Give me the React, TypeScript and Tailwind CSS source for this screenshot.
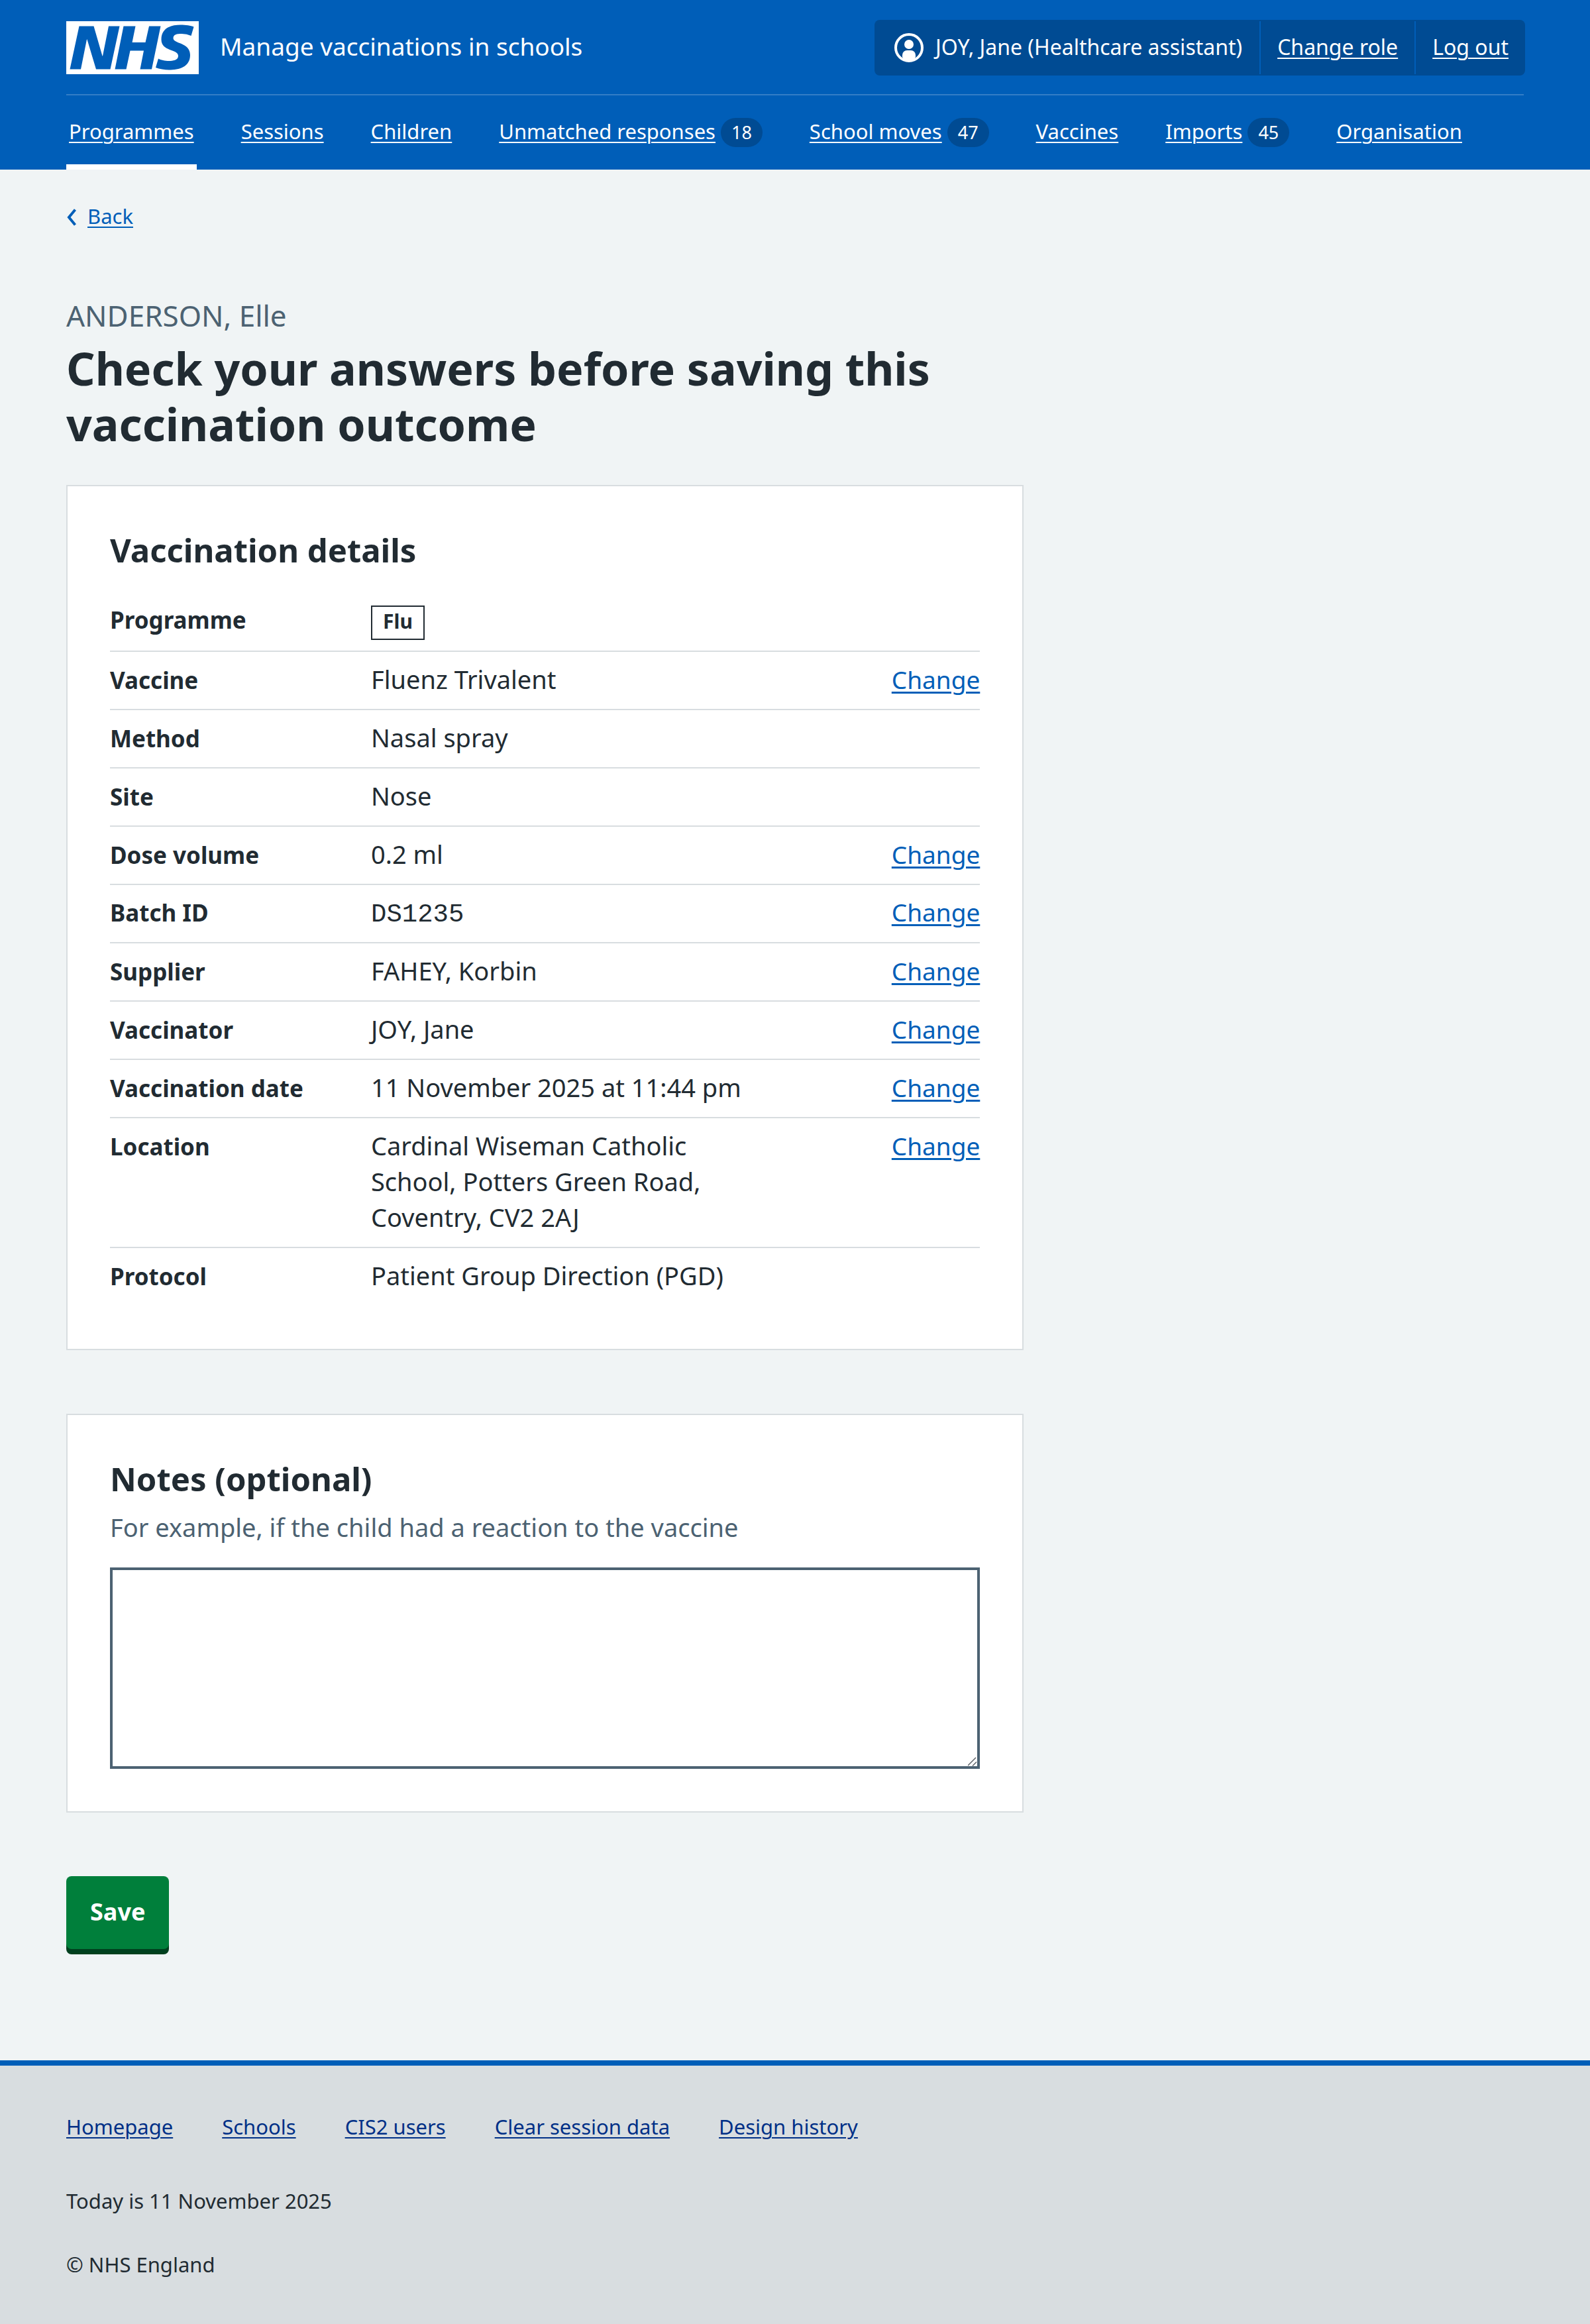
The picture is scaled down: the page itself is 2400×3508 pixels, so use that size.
import React from 'react';

type NavItem = { label: string; count?: number; current?: boolean };

const navItems: NavItem[] = [
  { label: 'Programmes', current: true },
  { label: 'Sessions' },
  { label: 'Children' },
  { label: 'Unmatched responses', count: 18 },
  { label: 'School moves', count: 47 },
  { label: 'Vaccines' },
  { label: 'Imports', count: 45 },
  { label: 'Organisation' },
];

type Row = { label: string; value: string; change?: boolean; kind?: 'tag' | 'code' };

const rows: Row[] = [
  { label: 'Programme', value: 'Flu', kind: 'tag' },
  { label: 'Vaccine', value: 'Fluenz Trivalent', change: true },
  { label: 'Method', value: 'Nasal spray' },
  { label: 'Site', value: 'Nose' },
  { label: 'Dose volume', value: '0.2 ml', change: true },
  { label: 'Batch ID', value: 'DS1235', change: true, kind: 'code' },
  { label: 'Supplier', value: 'FAHEY, Korbin', change: true },
  { label: 'Vaccinator', value: 'JOY, Jane', change: true },
  { label: 'Vaccination date', value: '11 November 2025 at 11:44 pm', change: true },
  {
    label: 'Location',
    value: 'Cardinal Wiseman Catholic School, Potters Green Road, Coventry, CV2 2AJ',
    change: true,
  },
  { label: 'Protocol', value: 'Patient Group Direction (PGD)' },
];

const footerLinks = ['Homepage', 'Schools', 'CIS2 users', 'Clear session data', 'Design history'];

function Logo() {
  return (
    <svg viewBox="0 0 200 80" className="h-20 w-[200px] shrink-0" role="img" aria-label="NHS">
      <path
        fill="#fff"
        d="M200 0v80H0V0h200Zm-27.5 5.5c-14.5 0-29 5-29 22 0 10.2 7.7 13.5 14.7 16.3l.7.3c5.4 2 10.1 3.9 10.1 8.4 0 6.5-8.5 7.5-14 7.5s-12.5-1.5-16-3.5L135 70c5.5 2 13.5 3.5 20 3.5 15.5 0 32-4.5 32-22.5 0-19.5-25.5-16.5-25.5-25.5 0-5.5 5.5-6.5 12.5-6.5a35 35 0 0 1 14.5 3l4-13.5c-4.5-2-12-3-20-3Zm-131 2h-22l-14 65H22l9-45h.5l13.5 45h21.5l14-65H64l-9 45h-.5l-13-45Zm63 0h-18l-13 65h17l6-28H117l-5.5 28H129l13.5-65H125L119.5 32h-20l5-24.5Z"
      />
    </svg>
  );
}

function UserIcon() {
  return (
    <svg viewBox="0 0 44 44" className="size-11 shrink-0" aria-hidden="true">
      <circle cx="22" cy="22" r="20" fill="none" stroke="#fff" strokeWidth="4" />
      <circle cx="22" cy="17" r="7" fill="#fff" />
      <path d="M12 36v-3a7 7 0 0 1 7-7h6a7 7 0 0 1 7 7v3c-2 4-6 6.500-10 6.500S14 40 12 36Z" fill="#fff" />
    </svg>
  );
}

function Header() {
  return (
    <header className="bg-[#005eb8] px-[100px] text-white">
      <div className="flex items-center justify-between border-b-2 border-[#337ec6] pt-[30px] pb-7">
        <a href="#" className="flex items-center gap-8">
          <Logo />
          <span className="pb-1 text-[37px] leading-[56px]">Manage vaccinations in schools</span>
        </a>
        <div className="-mr-0.5 flex h-21 items-center rounded-lg bg-[#004b93] text-[32px] leading-[48px]">
          <div className="flex h-20 items-center gap-[18px] border-r-2 border-[#005eb8] pr-[26px] pl-[30px]">
            <UserIcon />
            <span className="pb-0.5">JOY, Jane (Healthcare assistant)</span>
          </div>
          <div className="flex h-20 items-center border-r-2 border-[#005eb8] px-[25px]">
            <a href="#" className="pb-0.5 underline decoration-2 underline-offset-4">Change role</a>
          </div>
          <div className="flex h-20 items-center px-[25px]">
            <a href="#" className="pb-0.5 underline decoration-2 underline-offset-4">Log out</a>
          </div>
        </div>
      </div>
      <nav aria-label="Menu">
        <ul className="flex gap-[63px]">
          {navItems.map((item) => (
            <li
              key={item.label}
              className={
                item.current
                  ? 'flex h-28 items-baseline border-b-8 border-white px-1 pt-[34px]'
                  : 'flex h-28 items-baseline px-1 pt-[34px]'
              }
            >
              <a href="#" className="flex items-baseline gap-2 text-[31px] leading-[40px]">
                <span className="underline decoration-2 underline-offset-4">{item.label}</span>
                {item.count !== undefined && (
                  <span className="rounded-full bg-[#004b93] px-4 text-[27px] leading-[44px]">{item.count}</span>
                )}
              </a>
            </li>
          ))}
        </ul>
      </nav>
    </header>
  );
}

function SummaryRow({ row }: { row: Row }) {
  return (
    <div className="flex min-h-[88px] items-baseline border-b-2 border-[#d8dde0] text-[38px] leading-[54px] last:border-transparent">
      <dt className="w-[30%] pt-[14px] pb-3 text-[35px] font-bold">{row.label}</dt>
      {row.kind === 'tag' ? (
        <dd className="flex w-1/2 pt-5 pb-4">
          <strong className="flex h-13 items-center border-2 border-[#212b32] px-4 pb-1 text-[30px] font-bold">
            {row.value}
          </strong>
        </dd>
      ) : row.kind === 'code' ? (
        <dd className="w-1/2 pt-[14px] pr-16 pb-3">
          <code className="block font-['Liberation_Mono',monospace] text-[39px]">{row.value}</code>
        </dd>
      ) : (
        <dd className="w-1/2 pt-[14px] pr-16 pb-[18px]">{row.value}</dd>
      )}
      {row.change && (
        <dd className="w-1/5 pt-[14px] pb-3 text-right text-[37px]">
          <a
            href="#"
            aria-label={`Change ${row.label.toLowerCase()}`}
            className="text-[#005eb8] underline decoration-[3px] underline-offset-4"
          >
            Change
          </a>
        </dd>
      )}
    </div>
  );
}

export default function App() {
  return (
    <div className="flex min-h-screen flex-col bg-[#f0f4f5] font-['Noto_Sans',sans-serif] text-[#212b32]">
      <Header />

      <main className="grow px-[100px] pb-40">
        <a href="#" className="mt-[46px] inline-flex items-center gap-[17px] text-[31px] leading-[48px] text-[#005eb8]">
          <svg viewBox="0 0 15 26" className="mt-1 h-[26px] w-[15px]" fill="none" stroke="currentColor" strokeWidth="4" aria-hidden="true">
            <path d="M13.500 1.500 4 13l9.500 11.500" />
          </svg>
          <span className="underline decoration-2 underline-offset-4">Back</span>
        </a>

        <div className="mt-24 grid grid-cols-3 gap-16">
          <div className="col-span-2">
            <h1 className="mb-[50px] text-[68px] leading-[84px] font-bold">
              <span className="mb-2 block text-[44px] leading-[60px] font-normal text-[#4c6272]">
                ANDERSON, Elle
              </span>
              Check your answers before saving this vaccination outcome
            </h1>

            <section className="border-2 border-[#d8dde0] bg-white p-16">
              <h2 className="mb-8 text-[49px] leading-[64px] font-bold">Vaccination details</h2>
              <dl>
                {rows.map((row) => (
                  <SummaryRow key={row.label} row={row} />
                ))}
              </dl>
            </section>

            <form onSubmit={(event) => event.preventDefault()}>
              <div className="mt-24 border-2 border-[#d8dde0] bg-white p-16">
                <h2 className="mb-[14px] text-[49px] leading-[64px] font-bold">
                  <label htmlFor="notes">Notes (optional)</label>
                </h2>
                <p id="notes-hint" className="mb-[34px] text-[38px] leading-[54px] text-[#4c6272]">
                  For example, if the child had a reaction to the vaccine
                </p>
                <div className="relative">
                  <textarea
                    id="notes"
                    name="notes"
                    aria-describedby="notes-hint"
                    className="block h-[304px] w-full resize-none border-4 border-[#4c6272] bg-white p-2 text-[38px] leading-[54px]"
                  />
                  <svg viewBox="0 0 14 14" className="pointer-events-none absolute right-1 bottom-1 size-[14px]" stroke="#5f6368" strokeWidth="1.500" aria-hidden="true">
                    <path d="M0 13 12 1M7 13.500l6-6" />
                  </svg>
                </div>
              </div>
              <button
                type="submit"
                className="mt-24 mb-2 block h-[110px] rounded-lg bg-[#007f3b] px-9 pb-0.5 text-[36px] leading-[54px] font-bold text-white shadow-[0_8px_0_#00401e]"
              >
                Save
              </button>
            </form>
          </div>
        </div>
      </main>

      <footer className="border-t-8 border-[#005eb8] bg-[#d8dde0] px-[100px] pt-[68px] pb-[67px] text-[31px] leading-[48px]">
        <ul className="flex gap-[74px]">
          {footerLinks.map((label) => (
            <li key={label}>
              <a href="#" className="text-[#003087] underline decoration-2 underline-offset-4">{label}</a>
            </li>
          ))}
        </ul>
        <p className="mt-16">Today is 11 November 2025</p>
        <p className="mt-12">© NHS England</p>
      </footer>
    </div>
  );
}
